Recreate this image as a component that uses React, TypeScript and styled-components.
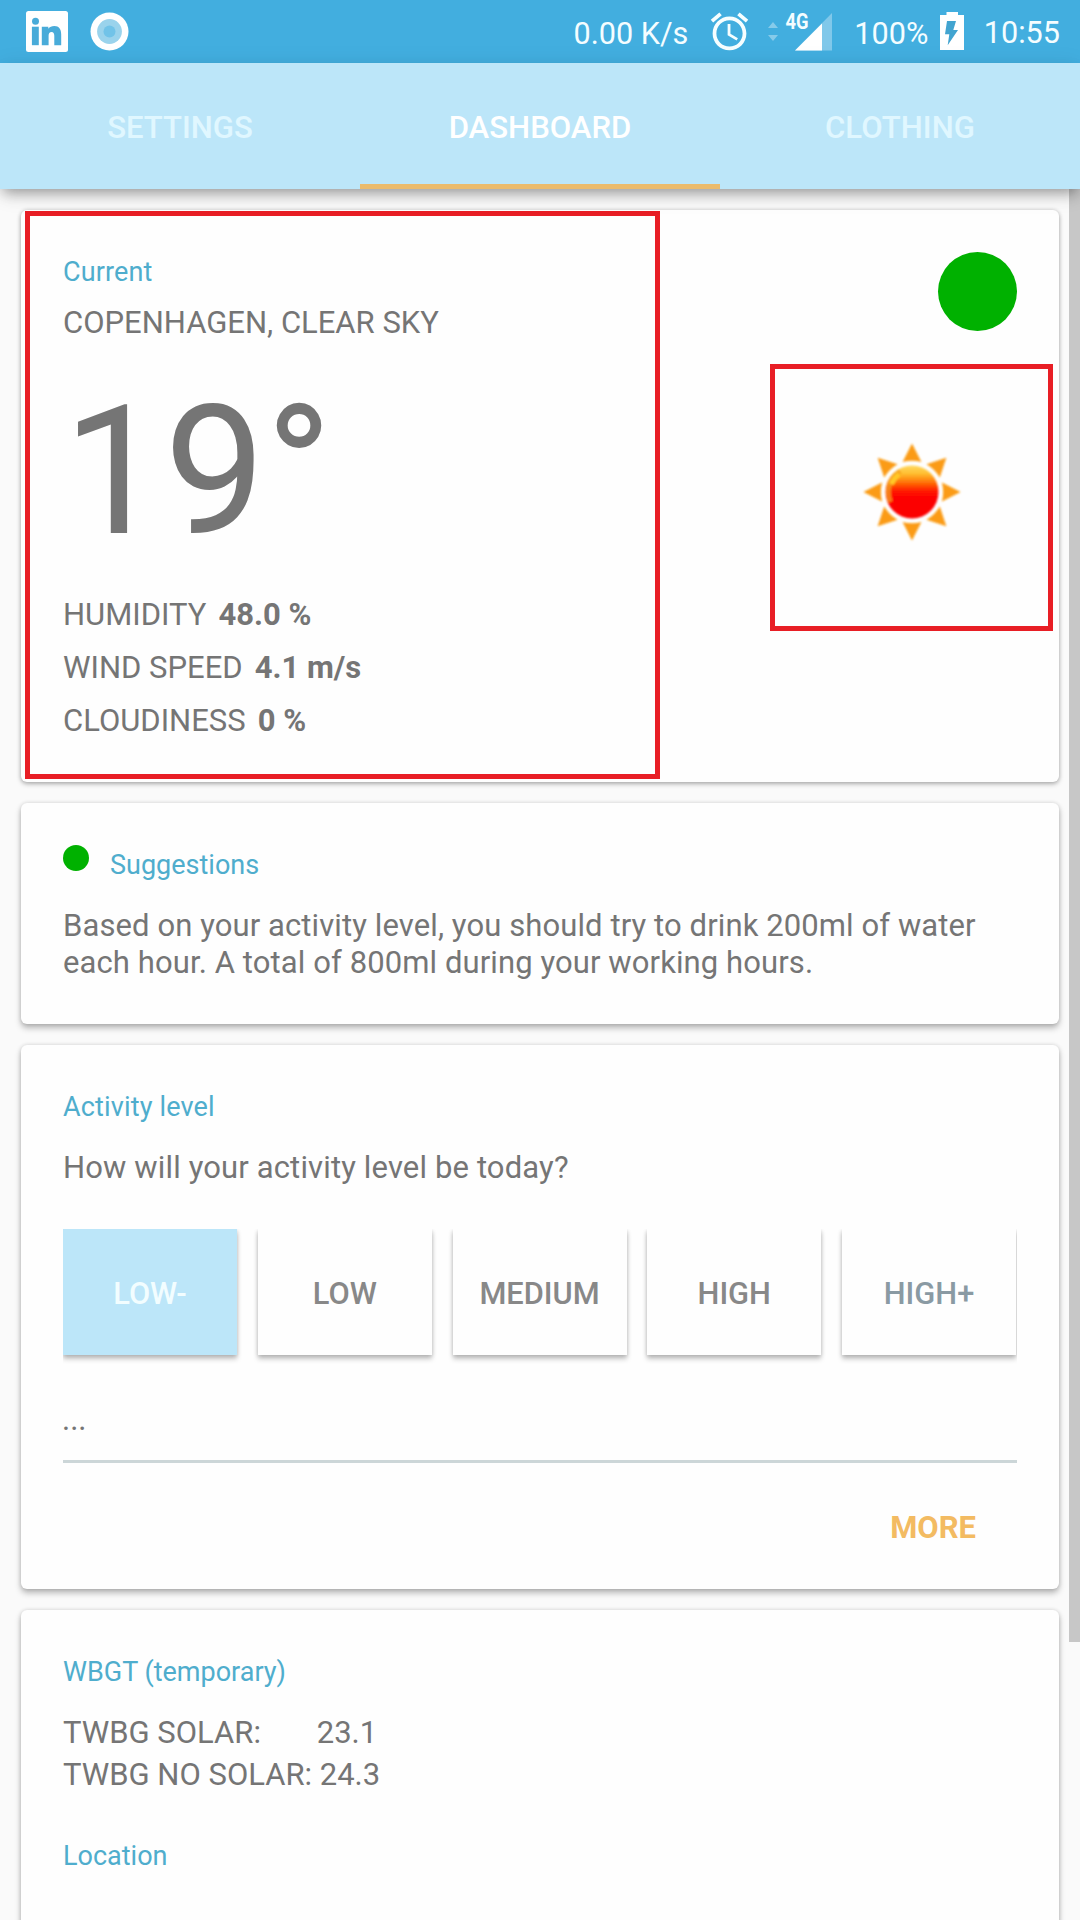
import React from "react";
import styled, { createGlobalStyle } from "styled-components";

const GlobalStyle = createGlobalStyle`
  *, *::before, *::after { box-sizing: border-box; }
  html, body { margin: 0; padding: 0; background: #fafafa; }
  body { font-family: Roboto, "Liberation Sans", sans-serif; overflow: hidden; }
  button { font: inherit; border: 0; margin: 0; padding: 0; background: none; }
`;

const Screen = styled.div`
  width: 1080px;
  height: 1920px;
  display: flex;
  flex-direction: column;
  overflow: hidden;
  background: #fafafa;
`;

/* ---------- status bar ---------- */

const StatusBar = styled.header`
  height: 63px;
  flex: none;
  display: flex;
  justify-content: space-between;
  background: #42aedf;
  color: #f4fdff;
`;

const StatusGroup = styled.div<{ $start?: boolean }>`
  display: flex;
  align-items: flex-start;
  padding: ${(p) => (p.$start ? "0 0 0 26px" : "0 20px 0 0")};
`;

const StatusIcon = styled.svg<{ $top: number; $left: number }>`
  display: block;
  flex: none;
  margin: ${(p) => `${p.$top}px 0 0 ${p.$left}px`};
  overflow: visible;
`;

const StatusText = styled.span<{ $top: number; $left?: number }>`
  margin: ${(p) => `${p.$top}px 0 0 ${p.$left ?? 0}px`};
  font-size: 30.6px;
  line-height: 36px;
  white-space: nowrap;
`;

/* ---------- tabs ---------- */

const TabBar = styled.nav`
  height: 126px;
  flex: none;
  display: grid;
  grid-template-columns: repeat(3, 1fr);
  background: #bce6f9;
  position: relative;
  z-index: 1;
  box-shadow: 0 7px 13px -3px rgba(0, 0, 0, 0.36), 0 4px 24px rgba(0, 0, 0, 0.08);
`;

const Tab = styled.button<{ $active?: boolean }>`
  padding-top: 7px;
  font-size: 31.1px;
  font-weight: 500;
  color: ${(p) => (p.$active ? "#ffffff" : "#e0f7ff")};
  border-bottom: 5px solid ${(p) => (p.$active ? "#ebbb6c" : "transparent")};
`;

/* ---------- content ---------- */

const Body = styled.main`
  flex: 1;
  min-height: 0;
  display: flex;
`;

const CardList = styled.div`
  flex: 1;
  display: flex;
  flex-direction: column;
  gap: 21px;
  padding: 21px 10px 0 21px;
`;

const ScrollThumb = styled.div`
  width: 11px;
  height: 1453px;
  background: #c7c7c7;
`;

const Card = styled.section<{ $height: number; $top?: number; $low?: boolean }>`
  flex: none;
  height: ${(p) => p.$height}px;
  padding: ${(p) => (p.$top ? `${p.$top}px 42px 0` : "0")};
  border-radius: 6px;
  background: #fefefe;
  box-shadow: ${(p) =>
    p.$low
      ? "0 2px 5px rgba(0,0,0,0.28), 0 0 4px rgba(0,0,0,0.14)"
      : "0 4px 6px rgba(0,0,0,0.27), 0 0 4px rgba(0,0,0,0.14)"};
`;

const WeatherCard = styled(Card)`
  display: flex;
  justify-content: space-between;
  padding: 1px 6px 3px 4px;
`;

const CurrentPanel = styled.div`
  width: 635px;
  height: 568px;
  padding: 40px 33px 0;
  border: 5px solid #e81e25;
`;

const Title = styled.h2<{ $mt?: number; $spacing?: number }>`
  margin: ${(p) => p.$mt ?? 0}px 0 0;
  font-size: 27px;
  font-weight: 400;
  line-height: 32px;
  letter-spacing: ${(p) => p.$spacing ?? 0}px;
  color: #4fadcd;
  white-space: nowrap;
`;

const Text = styled.p<{ $mt?: number; $lh?: number; $spacing?: number }>`
  margin: ${(p) => p.$mt ?? 0}px 0 0;
  font-size: 31px;
  line-height: ${(p) => p.$lh ?? 37}px;
  letter-spacing: ${(p) => p.$spacing ?? 0}px;
  color: #757575;
  white-space: pre;
`;

const Temperature = styled.div`
  margin: 26px 0 -1px;
  font-size: 180px;
  line-height: 210px;
  color: #757575;
`;

const Readings = styled.div`
  display: flex;
  flex-direction: column;
  gap: 16px;
  margin-top: 20px;
`;

const Value = styled.b`
  margin-left: 12px;
  font-weight: 700;
`;

const WeatherSide = styled.div`
  display: flex;
  flex-direction: column;
  align-items: flex-end;
  padding-top: 41px;
`;

const Dot = styled.span<{ $size: number }>`
  flex: none;
  width: ${(p) => p.$size}px;
  height: ${(p) => p.$size}px;
  border-radius: 50%;
  background: #00b100;
`;

const SideDot = styled(Dot)`
  margin-right: 36px;
`;

const SunPanel = styled.div`
  width: 283px;
  height: 267px;
  margin-top: 33px;
  display: flex;
  align-items: center;
  justify-content: center;
  padding: 0 0 11px 1px;
  border: 5px solid #e81e25;
`;

const SuggestionHead = styled.div`
  height: 36px;
  display: flex;
  gap: 21px;
`;

const Levels = styled.div`
  margin-top: 43px;
  height: 136px;
  display: grid;
  grid-template-columns: repeat(5, 174px);
  gap: 20.75px;
  overflow: hidden;
`;

const Level = styled.button<{ $tone?: "selected" | "cool" }>`
  height: 126px;
  padding-top: 2px;
  font-size: 30.8px;
  font-weight: 500;
  background: ${(p) => (p.$tone === "selected" ? "#bce6f9" : "#fefefe")};
  color: ${(p) =>
    p.$tone === "selected" ? "#f2fdff" : p.$tone === "cool" ? "#8a9aa3" : "#888888"};
  box-shadow: 0 4px 5px rgba(0, 0, 0, 0.22), 0 1px 4px rgba(0, 0, 0, 0.15);
`;

const Note = styled(Text)`
  margin: 36px 0 0 -1px;
`;

const Rule = styled.hr`
  height: 3px;
  margin: 22px 0 0;
  border: 0;
  background: #ccd6d8;
`;

const Actions = styled.div`
  display: flex;
  justify-content: flex-end;
  margin-top: 46px;
  padding-right: 41px;
`;

const MoreButton = styled.button`
  font-size: 31px;
  font-weight: 700;
  line-height: 37px;
  color: #f3bb62;
`;

const SolarValue = styled.span`
  margin-left: 2px;
`;

/* ---------- drawings ---------- */

const LinkedInIcon = () => (
  <StatusIcon $top={11} $left={0} width="42" height="41" viewBox="0 0 42 41">
    <rect width="42" height="41" rx="2.5" fill="#fff" />
    <g fill="#48abd9">
      <circle cx="9.5" cy="10.3" r="3.5" />
      <path d="M5.9 15.7H12.8V34.2H5.9Z" />
      <path d="M15.8 15.7H22.3V17.8C23.6 16 25.7 15 28.4 15C33 15 35.2 18 35.2 23.5V34.2H28.3V24.8C28.3 22.2 27.4 20.9 25.6 20.9C23.5 20.9 22.6 22.4 22.6 24.8V34.2H15.8Z" />
    </g>
  </StatusIcon>
);

const RingIcon = () => (
  <StatusIcon $top={12} $left={22} width="39" height="39" viewBox="0 0 39 39">
    <circle cx="19.5" cy="19.5" r="19" fill="#fff" />
    <circle cx="19.5" cy="19.5" r="12.4" fill="#9ad3ec" />
    <circle cx="19.5" cy="19.5" r="6" fill="#71c3e8" />
  </StatusIcon>
);

const AlarmIcon = () => (
  <StatusIcon $top={9} $left={19} width="45" height="45" viewBox="0 0 24 24" fill="#f6feff">
    <path d="M22 5.72l-4.6-3.86-1.29 1.53 4.6 3.86L22 5.72zM7.88 3.39L6.6 1.86 2 5.71l1.29 1.53 4.59-3.85zM12.5 8H11v6l4.75 2.85.75-1.23-4-2.37V8zM12 4c-4.97 0-9 4.03-9 9s4.02 9 9 9c4.97 0 9-4.03 9-9s-4.03-9-9-9zm0 16c-3.87 0-7-3.13-7-7s3.13-7 7-7 7 3.13 7 7-3.13 7-7 7z" />
  </StatusIcon>
);

const SignalIcon = () => (
  <StatusIcon $top={12} $left={15} width="65" height="39" viewBox="0 0 65 39">
    <path d="M1 16 6 10 11 16Z M1 23 6 29 11 23Z" fill="#86cbea" />
    <path d="M28 38.5 65 1V38.5Z" fill="#80c8ea" />
    <path d="M28 38.5 55 11.5V38.5Z" fill="#fff" />
    <text x="18.5" y="17.3" fontSize="22" fontWeight="700" textLength="23" lengthAdjust="spacingAndGlyphs" fill="#f4fdff">
      4G
    </text>
  </StatusIcon>
);

const BatteryIcon = () => (
  <StatusIcon $top={12} $left={12} width="24" height="38" viewBox="0 0 24 38">
    <path d="M0 3H6.5V0H18V3H24V38H0Z" fill="#fff" />
    <path d="M7 9H16L13.3 18H18L7.7 33.3 9.3 22.3H5Z" fill="#42a4d0" />
  </StatusIcon>
);

const RAY_ANGLES = [0, 45, 90, 135, 180, 225, 270, 315];

const SunIcon = () => (
  <svg width="102" height="102" viewBox="-52 -52 104 104">
    <defs>
      <linearGradient id="sunFace" x1="0" y1="0" x2="0" y2="1">
        <stop offset="0" stopColor="#ffd960" />
        <stop offset="0.15" stopColor="#ffbf30" />
        <stop offset="0.3" stopColor="#ff7a08" />
        <stop offset="0.48" stopColor="#ff1a00" />
        <stop offset="0.6" stopColor="#fd0000" />
        <stop offset="1" stopColor="#fb0000" />
      </linearGradient>
      <filter id="soften" x="-10%" y="-10%" width="120%" height="120%">
        <feGaussianBlur stdDeviation="1.2" />
      </filter>
      <clipPath id="sunClip">
        <circle r="27" />
      </clipPath>
    </defs>
    <g filter="url(#soften)">
      {RAY_ANGLES.map((a) => (
        <path key={a} d="M0-49.5 9.6-30.5Q0-33-9.6-30.5Z" fill="#fb9b12" transform={`rotate(${a})`} />
      ))}
      <circle r="27" fill="url(#sunFace)" />
      <g clipPath="url(#sunClip)">
        <path d="M-22 10A24.5 24.5 0 0 1-12-21" fill="none" stroke="#f59a1c" strokeWidth="5" opacity="0.8" />
        <path d="M-21-8A23 23 0 0 1-13-18" fill="none" stroke="#ffc928" strokeWidth="5" />
      </g>
    </g>
  </svg>
);

/* ---------- data ---------- */

const tabs = [{ label: "SETTINGS" }, { label: "DASHBOARD", active: true }, { label: "CLOTHING" }];

const readings = [
  { label: "HUMIDITY", value: "48.0 %" },
  { label: "WIND SPEED", value: "4.1 m/s" },
  { label: "CLOUDINESS", value: "0 %" },
];

const levels: { label: string; tone?: "selected" | "cool" }[] = [
  { label: "LOW-", tone: "selected" },
  { label: "LOW" },
  { label: "MEDIUM" },
  { label: "HIGH" },
  { label: "HIGH+", tone: "cool" },
];

export default function App() {
  return (
    <>
      <GlobalStyle />
      <Screen>
        <StatusBar>
          <StatusGroup $start>
            <LinkedInIcon />
            <RingIcon />
          </StatusGroup>
          <StatusGroup>
            <StatusText $top={16}>0.00 K/s</StatusText>
            <AlarmIcon />
            <SignalIcon />
            <StatusText $top={16} $left={22}>100%</StatusText>
            <BatteryIcon />
            <StatusText $top={15} $left={19.5}>10:55</StatusText>
          </StatusGroup>
        </StatusBar>

        <TabBar>
          {tabs.map((t) => (
            <Tab key={t.label} $active={t.active}>
              {t.label}
            </Tab>
          ))}
        </TabBar>

        <Body>
          <CardList>
            <WeatherCard $height={572} $low>
              <CurrentPanel>
                <Title $spacing={0.14}>Current</Title>
                <Text $mt={16}>COPENHAGEN, CLEAR SKY</Text>
                <Temperature>19°</Temperature>
                <Readings>
                  {readings.map((r) => (
                    <Text key={r.label}>
                      {r.label}
                      <Value>{r.value}</Value>
                    </Text>
                  ))}
                </Readings>
              </CurrentPanel>
              <WeatherSide>
                <SideDot $size={79} />
                <SunPanel>
                  <SunIcon />
                </SunPanel>
              </WeatherSide>
            </WeatherCard>

            <Card $height={221} $top={42}>
              <SuggestionHead>
                <Dot $size={26} />
                <Title $mt={4}>Suggestions</Title>
              </SuggestionHead>
              <Text $mt={26} $spacing={0.1}>
                {"Based on your activity level, you should try to drink 200ml of water\neach hour. A total of 800ml during your working hours."}
              </Text>
            </Card>

            <Card $height={544} $top={46}>
              <Title $spacing={0.15}>Activity level</Title>
              <Text $mt={26} $spacing={0.14}>
                How will your activity level be today?
              </Text>
              <Levels>
                {levels.map((l) => (
                  <Level key={l.label} $tone={l.tone}>
                    {l.label}
                  </Level>
                ))}
              </Levels>
              <Note>...</Note>
              <Rule />
              <Actions>
                <MoreButton>MORE</MoreButton>
              </Actions>
            </Card>

            <Card $height={400} $top={46}>
              <Title>WBGT (temporary)</Title>
              <Text $mt={24} $lh={42}>
                {"TWBG SOLAR:       "}
                <SolarValue>23.1</SolarValue>
                {"\nTWBG NO SOLAR: 24.3"}
              </Text>
              <Title $mt={44}>Location</Title>
            </Card>
          </CardList>
          <ScrollThumb />
        </Body>
      </Screen>
    </>
  );
}
